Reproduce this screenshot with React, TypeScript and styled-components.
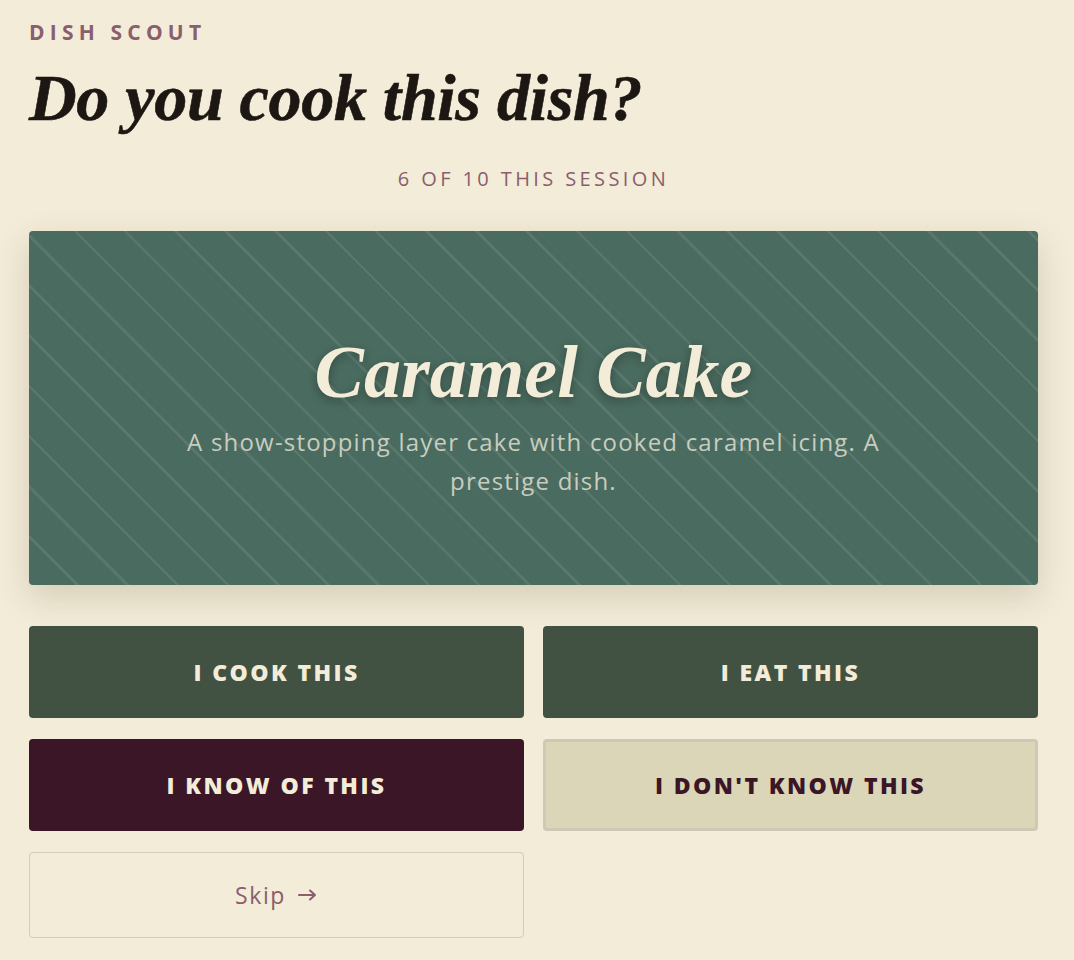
import styled, { createGlobalStyle } from 'styled-components';

const GlobalStyle = createGlobalStyle`
  html, body {
    margin: 0;
    padding: 0;
    background: #f2ecd9;
  }
  body {
    font-family: 'Open Sans', 'Liberation Sans', sans-serif;
  }
`;

type Variant = 'cook' | 'know' | 'unknown' | 'skip';

const answers: { label: string; variant: Variant }[] = [
  { label: 'I cook this', variant: 'cook' },
  { label: 'I eat this', variant: 'cook' },
  { label: 'I know of this', variant: 'know' },
  { label: "I don't know this", variant: 'unknown' },
];

function Arrow() {
  return (
    <svg width="20" height="14" viewBox="0 0 20 14" fill="none">
      <path
        d="M1 7h16M12 2.5L17 7l-5 4.5"
        stroke="currentColor"
        strokeWidth="2"
        strokeLinecap="round"
        strokeLinejoin="round"
      />
    </svg>
  );
}

export default function App() {
  return (
    <>
      <GlobalStyle />
      <Page>
        <Brand>Dish Scout</Brand>
        <Title>Do you cook this dish?</Title>
        <Progress>6 of 10 this session</Progress>
        <DishCard>
          <DishName>Caramel Cake</DishName>
          <DishText>
            A show-stopping layer cake with cooked caramel icing. A prestige
            dish.
          </DishText>
        </DishCard>
        <ButtonGrid>
          {answers.map((a) => (
            <AnswerButton key={a.label} $variant={a.variant}>
              {a.label}
            </AnswerButton>
          ))}
          <AnswerButton $variant="skip">
            Skip <Arrow />
          </AnswerButton>
        </ButtonGrid>
      </Page>
    </>
  );
}

const Page = styled.div`
  width: 1009px;
  margin-left: 29px;
  padding-top: 19px;
  padding-bottom: 24px;
  display: flex;
  flex-direction: column;
`;

const Brand = styled.div`
  font-family: 'Open Sans', sans-serif;
  font-size: 21px;
  font-weight: 700;
  letter-spacing: 5.2px;
  text-transform: uppercase;
  color: #8a5e6c;
  line-height: 26px;
`;

const Title = styled.h1`
  margin: 17px 0 0;
  font-family: 'Liberation Serif', 'DejaVu Serif', serif;
  font-style: italic;
  font-weight: 700;
  font-size: 66px;
  line-height: 72px;
  color: #1c1712;
  letter-spacing: -0.3px;
  -webkit-text-stroke: 0.6px #1c1712;
`;

const Progress = styled.div`
  margin-top: 33px;
  text-align: center;
  font-family: 'Open Sans', sans-serif;
  font-size: 20px;
  letter-spacing: 3.4px;
  text-transform: uppercase;
  color: #8a5e6c;
  line-height: 24px;
`;

const DishCard = styled.div`
  margin-top: 40px;
  height: 354px;
  border-radius: 4px;
  background-color: #4a6b5f;
  background-image: repeating-linear-gradient(
    45deg,
    transparent 0px,
    transparent 33px,
    rgba(255, 255, 255, 0.085) 33px,
    rgba(255, 255, 255, 0.085) 35.5px
  );
  box-shadow: 0 12px 34px rgba(80, 60, 20, 0.18);
  display: flex;
  flex-direction: column;
  align-items: center;
  justify-content: center;
  padding-top: 14px;
  box-sizing: border-box;
`;

const DishName = styled.h2`
  margin: 0;
  font-family: 'Liberation Serif', 'DejaVu Serif', serif;
  font-style: italic;
  font-weight: 700;
  font-size: 74px;
  line-height: 84px;
  color: #f3ecd8;
  text-shadow: 0 3px 10px rgba(0, 0, 0, 0.3);
`;

const DishText = styled.p`
  margin: 8px 0 0;
  max-width: 740px;
  text-align: center;
  font-family: 'Open Sans', sans-serif;
  font-size: 24px;
  letter-spacing: 1.2px;
  line-height: 39px;
  color: #c8cdbf;
`;

const ButtonGrid = styled.div`
  margin-top: 41px;
  display: grid;
  grid-template-columns: 1fr 1fr;
  column-gap: 19px;
  row-gap: 21px;
`;

const palette: Record<Variant, { bg: string; fg: string; border: string }> = {
  cook: { bg: '#425242', fg: '#f2ecd9', border: '#425242' },
  know: { bg: '#3b1626', fg: '#f2ecd9', border: '#3b1626' },
  unknown: { bg: '#dcd6b9', fg: '#3b1626', border: '#d0c8b5' },
  skip: { bg: 'transparent', fg: '#8a5e6c', border: '#d4cbb8' },
};

const AnswerButton = styled.button<{ $variant: Variant }>`
  height: ${(p) => (p.$variant === 'skip' ? '86px' : '92px')};
  border-radius: 4px;
  background: ${(p) => palette[p.$variant].bg};
  color: ${(p) => palette[p.$variant].fg};
  border: ${(p) =>
      p.$variant === 'unknown' ? '3px' : p.$variant === 'skip' ? '1.5px' : '0'}
    solid ${(p) => palette[p.$variant].border};
  display: flex;
  align-items: center;
  justify-content: center;
  gap: 12px;
  font-family: 'Open Sans', sans-serif;
  font-size: 23px;
  font-weight: ${(p) => (p.$variant === 'skip' ? 400 : 800)};
  letter-spacing: ${(p) => (p.$variant === 'skip' ? '1.6px' : '2.4px')};
  text-transform: ${(p) => (p.$variant === 'skip' ? 'none' : 'uppercase')};
  cursor: pointer;
`;
